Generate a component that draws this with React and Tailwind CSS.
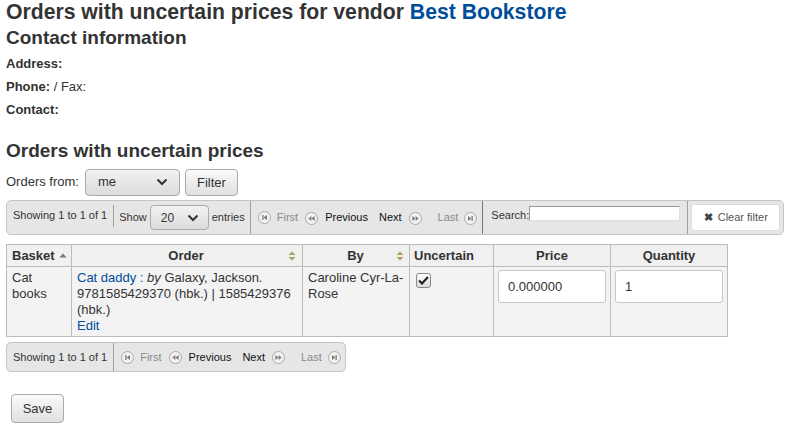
import React from 'react';

const PageIcon = ({ kind }) => {
  const tri = {
    first: <><rect x="4.2" y="4" width="1.3" height="5" /><path d="M9 4 L5.6 6.5 L9 9 Z" /></>,
    prev: <><path d="M6.4 4 L3.4 6.5 L6.4 9 Z" /><path d="M9.6 4 L6.6 6.5 L9.6 9 Z" /></>,
    next: <><path d="M3.4 4 L6.4 6.5 L3.4 9 Z" /><path d="M6.6 4 L9.6 6.5 L6.6 9 Z" /></>,
    last: <><path d="M4 4 L7.4 6.5 L4 9 Z" /><rect x="7.5" y="4" width="1.3" height="5" /></>,
  }[kind];
  return (
    <svg width="13" height="13" viewBox="0 0 13 13" className="inline-block shrink-0">
      <circle cx="6.5" cy="6.5" r="6" fill="#f2f2f2" stroke="#a8a8a8" strokeWidth="1" />
      <g fill="#7a7a7a">{tri}</g>
    </svg>
  );
};

const Pager = () => (
  <div className="flex items-center text-[11px] whitespace-nowrap">
    <PageIcon kind="first" />
    <span className="text-[#8a8a8a] ml-[6px]">First</span>
    <span className="ml-[7px]"><PageIcon kind="prev" /></span>
    <span className="text-[#111] ml-[7px]">Previous</span>
    <span className="text-[#111] ml-[11px]">Next</span>
    <span className="ml-[7px]"><PageIcon kind="next" /></span>
    <span className="text-[#8a8a8a] ml-[16px]">Last</span>
    <span className="ml-[6px]"><PageIcon kind="last" /></span>
  </div>
);

const Chevron = () => (
  <svg width="12" height="8" viewBox="0 0 12 8" className="shrink-0">
    <path d="M1.5 1.5 L6 6 L10.5 1.5" fill="none" stroke="#333" strokeWidth="2" />
  </svg>
);

const SortBoth = () => (
  <svg width="8" height="10" viewBox="0 0 8 10" className="shrink-0">
    <path d="M4 0.5 L7.5 4 L0.5 4 Z" fill="#a8a25a" />
    <path d="M0.5 6 L7.5 6 L4 9.5 Z" fill="#a8a25a" />
  </svg>
);

const SortAsc = () => (
  <svg width="8" height="5" viewBox="0 0 8 5" className="shrink-0">
    <path d="M4 0.5 L7.5 4.5 L0.5 4.5 Z" fill="#777" />
  </svg>
);

export default function App() {
  return (
    <div className="w-[788px] h-[429px] bg-white text-[#333] font-['Liberation_Sans',Arial,sans-serif] text-[13px] px-[6px] overflow-hidden">
      <h1 className="text-[21.2px] font-bold leading-[24px]">
        Orders with uncertain prices for vendor <a className="text-[#004d99]">Best Bookstore</a>
      </h1>
      <h2 className="text-[19px] font-bold leading-[22px] mt-[3px]">Contact information</h2>
      <div className="mt-[3px] leading-[23px]">
        <p><b>Address:</b></p>
        <p><b>Phone:</b> / Fax:</p>
        <p><b>Contact:</b></p>
      </div>

      <h3 className="text-[19px] font-bold leading-[22px] mt-[19px]">Orders with uncertain prices</h3>
      <div className="flex items-center mt-[6px] h-[28px]">
        <span className="mr-[6px]">Orders from:</span>
        <div className="w-[95px] h-[27px] rounded-[4px] border border-[#aaa] bg-gradient-to-b from-[#f2f2f2] to-[#dcdcdc] flex items-center justify-between pl-[12px] pr-[11px]">
          <span>me</span>
          <Chevron />
        </div>
        <button className="ml-[5px] mt-[1px] h-[27px] px-[11px] rounded-[4px] border border-[#aaa] bg-gradient-to-b from-[#fafafa] to-[#e0e0e0] text-[13px]">Filter</button>
      </div>

      {/* top toolbar */}
      <div className="mt-[4px] w-[778px] h-[35px] rounded-[5px] border border-[#c4c4c4] bg-[#e6e6e6] flex items-center text-[11px] whitespace-nowrap">
        <div className="shrink-0 pl-[6px] pr-[6px] h-[22px] -mt-[4px] flex items-center border-r border-[#a0a0a0]">Showing 1 to 1 of 1</div>
        <div className="shrink-0 flex items-center pl-[5px] pr-[5px] border-r border-[#a0a0a0] h-[33px]">
          <span>Show</span>
          <div className="ml-[3px] w-[59px] h-[25px] rounded-[4px] border border-[#aaa] bg-gradient-to-b from-[#f2f2f2] to-[#dcdcdc] flex items-center justify-between pl-[10px] pr-[9px] text-[12px]">
            <span>20</span>
            <Chevron />
          </div>
          <span className="ml-[3px]">entries</span>
        </div>
        <div className="shrink-0 border-r border-[#777] h-[33px] flex items-center pl-[7px] pr-[5px]">
          <Pager />
        </div>
        <div className="shrink-0 flex items-start pl-[8px] pr-[7px] border-r border-[#a0a0a0] h-[33px] pt-[5px]">
          <span className="mt-[1px]">Search:</span>
          <input className="w-[151px] h-[15px] bg-white border border-[#999] border-b-[#ddd] border-r-[#ddd] outline-none" />
        </div>
        <button className="shrink-0 ml-[3px] w-[89px] h-[27px] bg-white rounded-[3px] border border-[#ddd] flex items-center justify-center gap-[5px] text-[11px] text-[#555]">
          <span className="text-[11px] font-bold text-[#444] leading-none">✖</span>Clear filter
        </button>
      </div>

      {/* table */}
      <table className="mt-[9px] border-collapse text-[13px]">
        <thead>
          <tr className="bg-[#f0f0f0] h-[22px]">
            <th className="w-[65px] border border-[#bcbcbc] text-left pl-[5px] pr-[4px] font-bold">
              <div className="flex items-center gap-[4px]">Basket <SortAsc /></div>
            </th>
            <th className="w-[231px] border border-[#bcbcbc] font-bold pl-[4px] pr-[6px]">
              <div className="flex items-center justify-between"><span className="flex-1 text-center pl-[8px]">Order</span><SortBoth /></div>
            </th>
            <th className="w-[107px] border border-[#bcbcbc] font-bold pl-[4px] pr-[5px]">
              <div className="flex items-center justify-between"><span className="flex-1 text-center pl-[8px]">By</span><SortBoth /></div>
            </th>
            <th className="w-[84px] border border-[#bcbcbc] font-bold text-left pl-[4px]">Uncertain</th>
            <th className="w-[117px] border border-[#bcbcbc] font-bold">Price</th>
            <th className="w-[117px] border border-[#bcbcbc] font-bold">Quantity</th>
          </tr>
        </thead>
        <tbody>
          <tr className="bg-[#f3f3f3] h-[70px] align-top leading-[16px]">
            <td className="border border-[#bcbcbc] px-[5px] pt-[3px]">Cat<br />books</td>
            <td className="border border-[#bcbcbc] px-[5px] pt-[3px]">
              <a className="text-[#004d99]">Cat daddy : </a><i>by</i> Galaxy, Jackson.<br />
              9781585429370 (hbk.) | 1585429376<br />
              (hbk.)<br />
              <a className="text-[#004d99]">Edit</a>
            </td>
            <td className="border border-[#bcbcbc] px-[5px] pt-[3px]">Caroline Cyr-La-<br />Rose</td>
            <td className="border border-[#bcbcbc] px-[6px] pt-[6px]">
              <div className="w-[15px] h-[15px] rounded-[3px] border border-[#888] bg-gradient-to-b from-[#fff] to-[#ddd] flex items-center justify-center">
                <svg width="11" height="9" viewBox="0 0 11 9"><path d="M1 4.5 L4 7.5 L10 1" fill="none" stroke="#222" strokeWidth="2.2" /></svg>
              </div>
            </td>
            <td className="border border-[#bcbcbc] px-[4px] pt-[3px]">
              <div className="w-[108px] h-[33px] bg-white border border-[#c8c8c8] rounded-[3px] flex items-center pl-[9px] text-[#333]">0.000000</div>
            </td>
            <td className="border border-[#bcbcbc] px-[4px] pt-[3px]">
              <div className="w-[108px] h-[33px] bg-white border border-[#c8c8c8] rounded-[3px] flex items-center pl-[9px] text-[#333]">1</div>
            </td>
          </tr>
        </tbody>
      </table>

      {/* bottom toolbar */}
      <div className="mt-[5px] w-[340px] h-[30px] rounded-[5px] border border-[#c4c4c4] bg-[#e6e6e6] flex items-center text-[11px] whitespace-nowrap">
        <div className="shrink-0 pl-[6px] pr-[6px] h-[28px] flex items-center border-r border-[#a0a0a0]">Showing 1 to 1 of 1</div>
        <div className="pl-[7px]">
          <Pager />
        </div>
      </div>

      <button className="mt-[22px] ml-[5px] w-[53px] h-[29px] rounded-[4px] border border-[#aaa] bg-gradient-to-b from-[#fafafa] to-[#e0e0e0] text-[13px]">Save</button>
    </div>
  );
}
